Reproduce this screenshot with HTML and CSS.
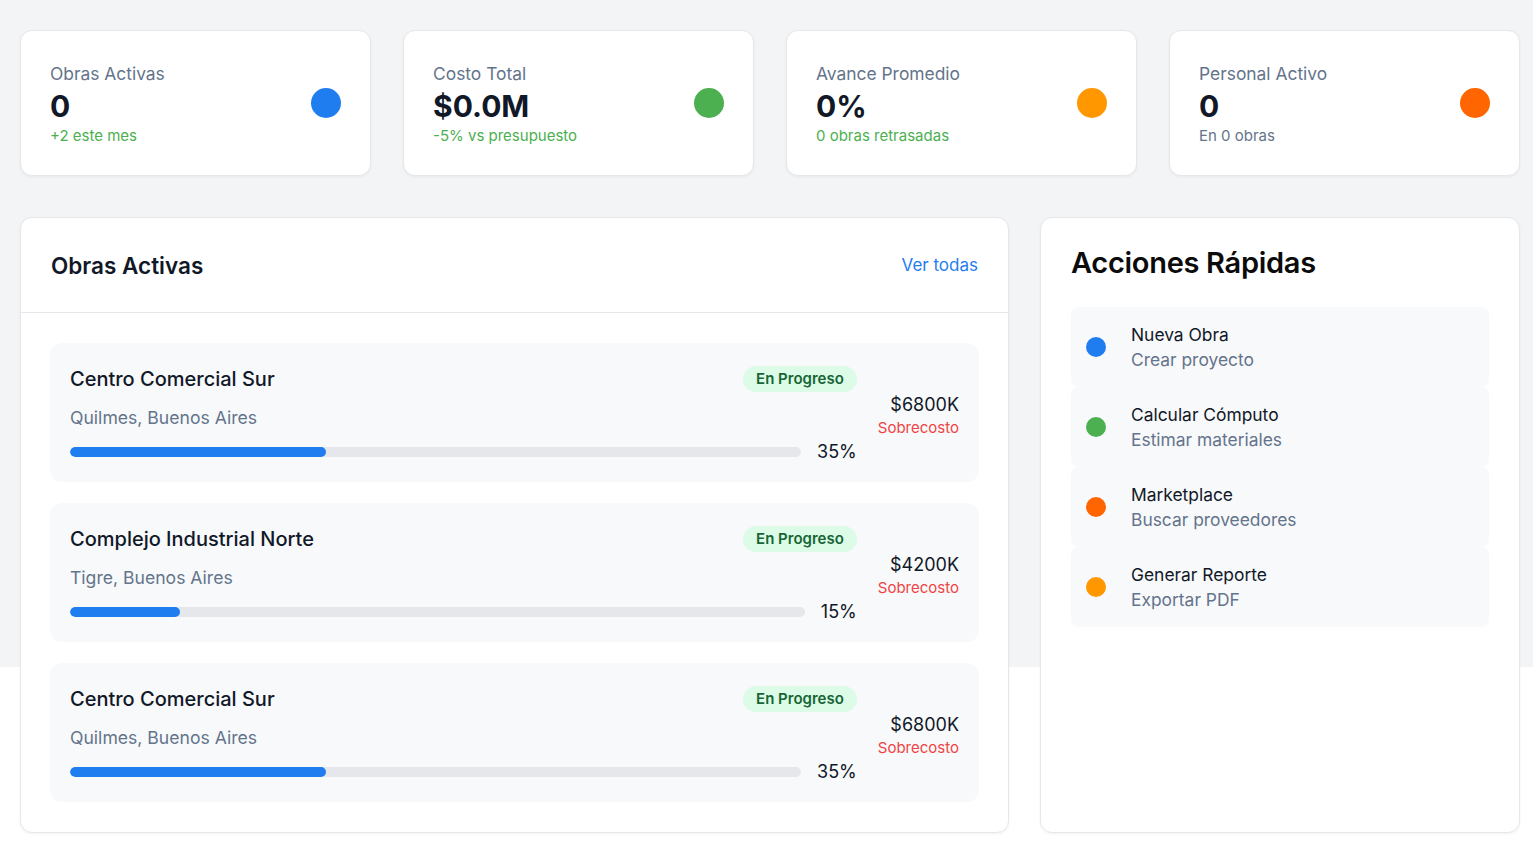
FILE: index.html
```html
<!DOCTYPE html>
<html lang="es">
<head>
<meta charset="utf-8">
<title>Dashboard</title>
<link rel="stylesheet" href="styles.css">
</head>
<body>
<main class="page">
  <section class="stats">
    <div class="stat-card">
      <div class="stat-info">
        <div class="stat-label">Obras Activas</div>
        <div class="stat-value">0</div>
        <div class="stat-sub">+2 este mes</div>
      </div>
      <span class="dot dot-lg blue"></span>
    </div>
    <div class="stat-card">
      <div class="stat-info">
        <div class="stat-label">Costo Total</div>
        <div class="stat-value">$0.0M</div>
        <div class="stat-sub">-5% vs presupuesto</div>
      </div>
      <span class="dot dot-lg green"></span>
    </div>
    <div class="stat-card">
      <div class="stat-info">
        <div class="stat-label">Avance Promedio</div>
        <div class="stat-value">0%</div>
        <div class="stat-sub">0 obras retrasadas</div>
      </div>
      <span class="dot dot-lg orange"></span>
    </div>
    <div class="stat-card">
      <div class="stat-info">
        <div class="stat-label">Personal Activo</div>
        <div class="stat-value">0</div>
        <div class="stat-sub muted">En 0 obras</div>
      </div>
      <span class="dot dot-lg deep-orange"></span>
    </div>
  </section>

  <section class="lower">
    <div class="card works">
      <header class="works-header">
        <h2 class="works-title">Obras Activas</h2>
        <a class="link" href="#">Ver todas</a>
      </header>
      <div class="works-list">
        <article class="work">
          <div class="work-main">
            <div class="work-top">
              <h3 class="work-name">Centro Comercial Sur</h3>
              <span class="badge">En Progreso</span>
            </div>
            <div class="work-loc">Quilmes, Buenos Aires</div>
            <div class="progress-row">
              <div class="bar"><div class="bar-fill" style="width:35%"></div></div>
              <span class="pct">35%</span>
            </div>
          </div>
          <div class="work-cost">
            <div class="cost">$6800K</div>
            <div class="over">Sobrecosto</div>
          </div>
        </article>
        <article class="work">
          <div class="work-main">
            <div class="work-top">
              <h3 class="work-name">Complejo Industrial Norte</h3>
              <span class="badge">En Progreso</span>
            </div>
            <div class="work-loc">Tigre, Buenos Aires</div>
            <div class="progress-row">
              <div class="bar"><div class="bar-fill" style="width:15%"></div></div>
              <span class="pct">15%</span>
            </div>
          </div>
          <div class="work-cost">
            <div class="cost">$4200K</div>
            <div class="over">Sobrecosto</div>
          </div>
        </article>
        <article class="work">
          <div class="work-main">
            <div class="work-top">
              <h3 class="work-name">Centro Comercial Sur</h3>
              <span class="badge">En Progreso</span>
            </div>
            <div class="work-loc">Quilmes, Buenos Aires</div>
            <div class="progress-row">
              <div class="bar"><div class="bar-fill" style="width:35%"></div></div>
              <span class="pct">35%</span>
            </div>
          </div>
          <div class="work-cost">
            <div class="cost">$6800K</div>
            <div class="over">Sobrecosto</div>
          </div>
        </article>
      </div>
    </div>

    <div class="card actions">
      <h2 class="actions-title">Acciones Rápidas</h2>
      <div class="action-list">
        <div class="action">
          <span class="dot blue"></span>
          <div class="action-text">
            <div class="action-name">Nueva Obra</div>
            <div class="action-desc">Crear proyecto</div>
          </div>
        </div>
        <div class="action">
          <span class="dot green"></span>
          <div class="action-text">
            <div class="action-name">Calcular Cómputo</div>
            <div class="action-desc">Estimar materiales</div>
          </div>
        </div>
        <div class="action">
          <span class="dot deep-orange"></span>
          <div class="action-text">
            <div class="action-name">Marketplace</div>
            <div class="action-desc">Buscar proveedores</div>
          </div>
        </div>
        <div class="action">
          <span class="dot orange"></span>
          <div class="action-text">
            <div class="action-name">Generar Reporte</div>
            <div class="action-desc">Exportar PDF</div>
          </div>
        </div>
      </div>
    </div>
  </section>
</main>
</body>
</html>
```

FILE: styles.css
```css
* { box-sizing: border-box; }

html, body {
  margin: 0;
  padding: 0;
  font-family: Inter, "Noto Sans", "Liberation Sans", sans-serif;
  color: #111827;
}

body {
  background: linear-gradient(#f3f4f6 0, #f3f4f6 667px, #ffffff 667px) no-repeat;
  background-color: #ffffff;
}

.page {
  padding: 30px 13px 10px 20px;
}

h2, h3 { margin: 0; }

/* stat cards */
.stats {
  display: grid;
  grid-template-columns: repeat(4, 1fr);
  gap: 32px;
}

.stat-card {
  background: #fff;
  border: 1px solid #e5e7eb;
  border-radius: 12px;
  box-shadow: 0 1px 3px rgba(0,0,0,0.05);
  height: 146px;
  padding: 3px 29px 0 29px;
  display: flex;
  align-items: center;
  justify-content: space-between;
}

.stat-label {
  font-size: 17.4px;
  line-height: 24px;
  color: #64748b;
}

.stat-value {
  font-size: 30px;
  line-height: 36px;
  font-weight: 700;
  color: #111827;
  margin-top: 2px;
}

.stat-sub {
  font-size: 15px;
  line-height: 22px;
  color: #4caf50;
  margin-top: 1px;
}

.stat-sub.muted { color: #64748b; }

.dot {
  display: inline-block;
  width: 20px;
  height: 20px;
  border-radius: 50%;
  flex-shrink: 0;
}

.dot-lg { width: 30px; height: 30px; margin-top: -3px; }

.blue { background: #1f7def; }
.green { background: #4caf50; }
.orange { background: #ff9800; }
.deep-orange { background: #ff6500; }

/* lower area */
.lower {
  display: grid;
  grid-template-columns: 1fr 480px;
  gap: 31px;
  margin-top: 41px;
  align-items: stretch;
}

.card {
  background: #fff;
  border: 1px solid #e5e7eb;
  border-radius: 12px;
  box-shadow: 0 1px 3px rgba(0,0,0,0.05);
}

.works-header {
  height: 95px;
  padding: 0 30px;
  display: flex;
  align-items: center;
  justify-content: space-between;
  border-bottom: 1px solid #e5e7eb;
}

.works-title {
  font-size: 22.5px;
  font-weight: 600;
  color: #111827;
}

.link {
  font-size: 17px;
  color: #1f7def;
  text-decoration: none;
}

.works-list {
  padding: 30px 29px 30px 29px;
  display: flex;
  flex-direction: column;
  gap: 21px;
}

.work {
  background: #f8f9fb;
  border-radius: 12px;
  height: 139px;
  padding: 21px 20px 17px 20px;
  display: flex;
  align-items: center;
  gap: 21px;
}

.work-main {
  flex: 1;
  align-self: stretch;
  display: flex;
  flex-direction: column;
}

.work-top {
  height: 30px;
  display: flex;
  align-items: center;
  justify-content: space-between;
}

.work-name {
  font-size: 20px;
  font-weight: 500;
  color: #111827;
}

.badge {
  background: #dcfce7;
  color: #166534;
  font-size: 15px;
  font-weight: 600;
  line-height: 26px;
  height: 26px;
  padding: 0 13px;
  border-radius: 13px;
}

.work-loc {
  font-size: 17.6px;
  line-height: 26px;
  color: #64748b;
  margin-top: 11px;
}

.progress-row {
  display: flex;
  align-items: center;
  gap: 16px;
  margin-top: 8px;
}

.bar {
  flex: 1;
  height: 10px;
  background: #e5e7eb;
  border-radius: 5px;
  overflow: hidden;
}

.bar-fill {
  height: 100%;
  background: #1f7def;
  border-radius: 5px;
}

.pct {
  font-size: 18px;
  line-height: 26px;
  color: #111827;
}

.work-cost {
  text-align: right;
  margin-top: 2px;
}

.cost {
  font-size: 18px;
  line-height: 24px;
  color: #111827;
}

.over {
  font-size: 15px;
  line-height: 22px;
  color: #ef4444;
}

/* actions */
.actions {
  padding: 28px 30px 30px 30px;
}

.actions-title {
  font-size: 29px;
  line-height: 34px;
  font-weight: 600;
  color: #0b0b0b;
  letter-spacing: -0.3px;
}

.action-list {
  margin-top: 27px;
  display: flex;
  flex-direction: column;
}

.action {
  height: 80px;
  background: #f8f9fb;
  border-radius: 8px;
  display: flex;
  align-items: center;
  gap: 25px;
  padding: 0 15px;
}

.action-name {
  font-size: 17.4px;
  line-height: 25px;
  color: #111827;
}

.action-desc {
  font-size: 17.4px;
  line-height: 25px;
  color: #64748b;
}
```
